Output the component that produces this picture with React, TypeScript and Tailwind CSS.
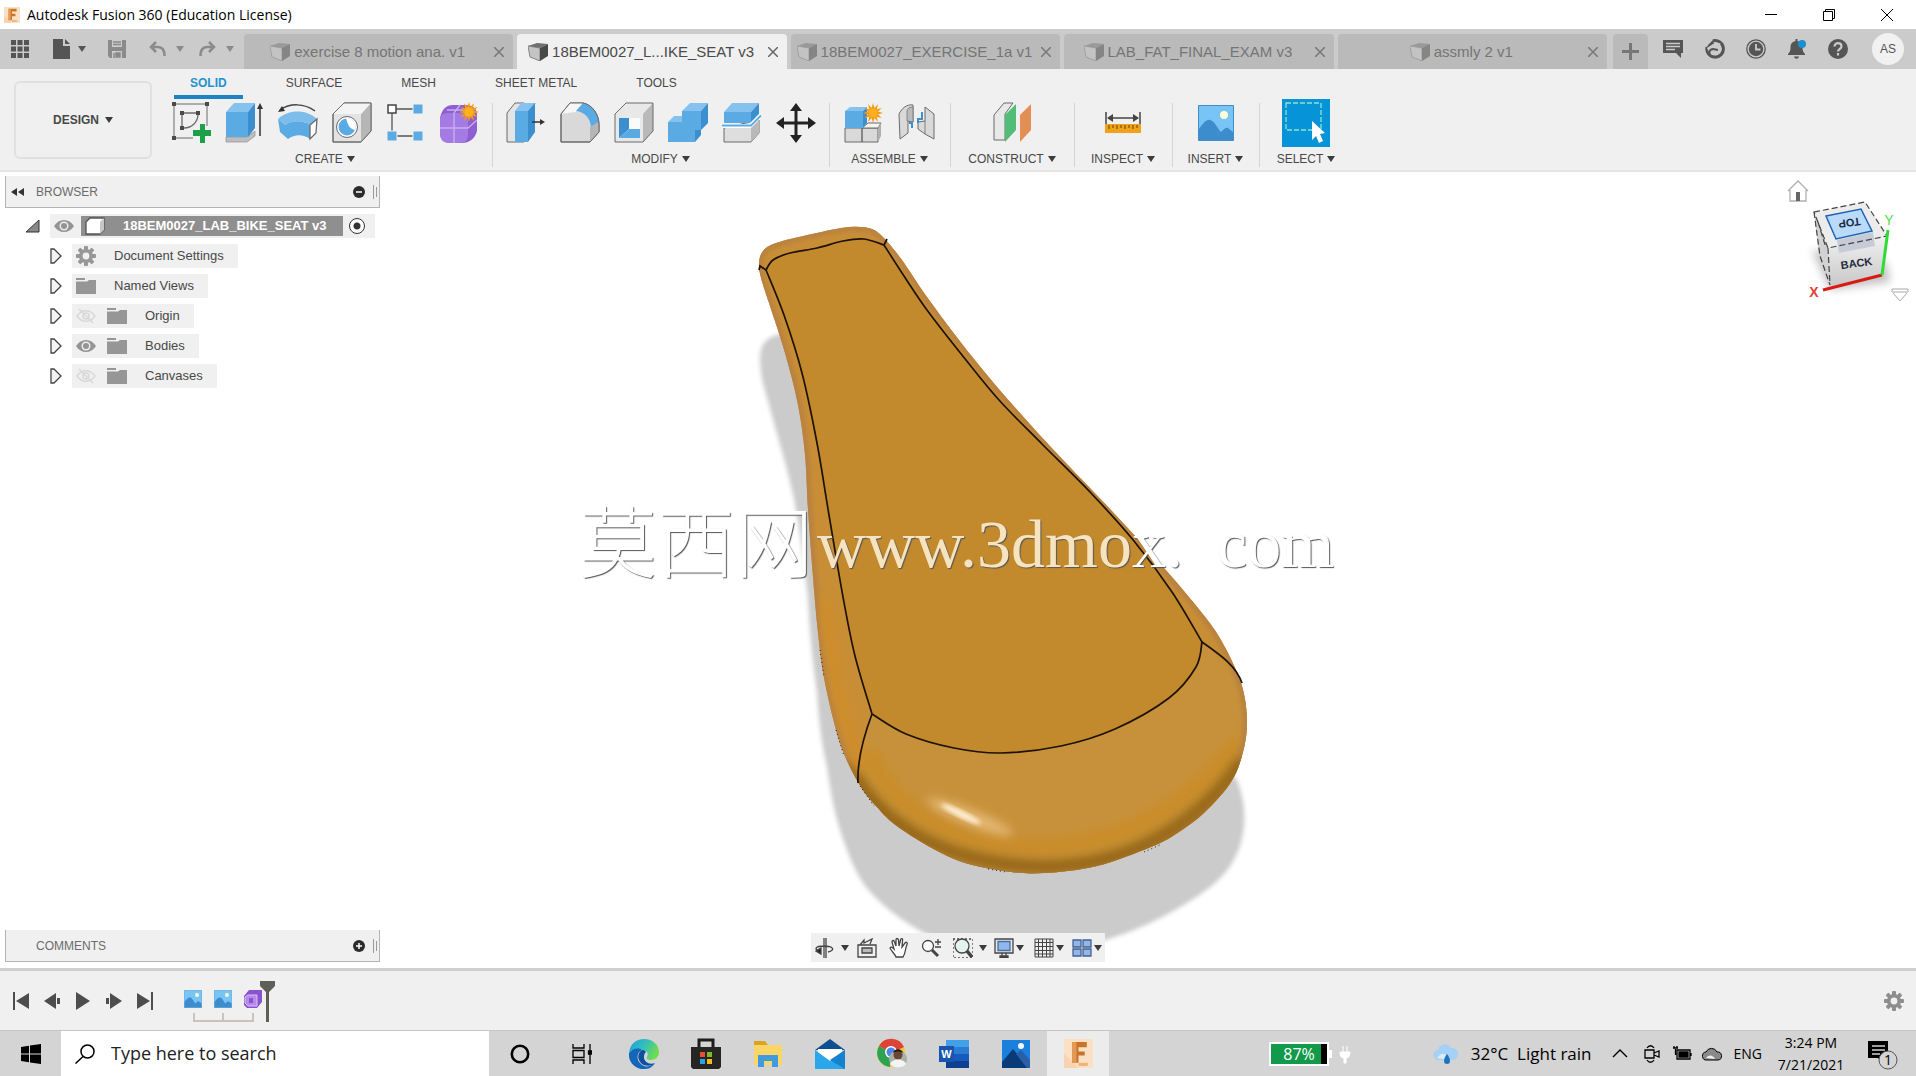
import React from "react";

type Kids = { children: React.ReactNode };

function Caret({ className = "fill-[#3c3c3c]" }: { className?: string }) {
  return (
    <svg width="8" height="6" viewBox="0 0 8 6" className={className} aria-hidden="true">
      <path d="M0 0h8L4 6z" />
    </svg>
  );
}

function Gear({ size, color }: { size: number; color: string }) {
  return (
    <svg width={size} height={size} viewBox="0 0 20 20" aria-hidden="true">
      <g fill={color}>
        {[0, 45, 90, 135].map((a) => (
          <rect key={a} x="8" y="0" width="4" height="20" rx="1" transform={`rotate(${a} 10 10)`} />
        ))}
        <circle cx="10" cy="10" r="7" />
      </g>
      <circle cx="10" cy="10" r="3.4" fill="#f0f0f0" />
    </svg>
  );
}

/* ---------- title bar ---------- */

function FusionLogo({ size }: { size: number }) {
  return (
    <svg width={size} height={size} viewBox="0 0 28 28" aria-hidden="true">
      <rect width="28" height="28" fill="#fbe0c4" />
      <path d="M0 14 14 28H0z" fill="#f8d3ae" />
      <path d="M8 3h14v5h-8v4h6v4h-6v7H8z" fill="#c9742a" />
      <path d="M8 3h4v20H8z" fill="#e39a55" />
      <path d="M14 23h9v3h-9z" fill="#efb277" />
    </svg>
  );
}

function TitleBar() {
  return (
    <header className="flex h-[29px] shrink-0 items-center bg-white pl-1 font-['Open_Sans',sans-serif]">
      <FusionLogo size={16} />
      <h1 className="ml-[7px] flex-1 text-[14px] leading-5 text-black">Autodesk Fusion 360 (Education License)</h1>
      <button aria-label="Minimize" className="flex h-full w-[58px] items-center justify-center">
        <svg width="12" height="12" stroke="#000" fill="none"><path d="M0 5.5h12" /></svg>
      </button>
      <button aria-label="Restore" className="flex h-full w-[58px] items-center justify-center">
        <svg width="12" height="12" stroke="#000" fill="none"><path d="M.5 2.5h9v9h-9zM2.500 2.500v-2h9v9h-2" /></svg>
      </button>
      <button aria-label="Close" className="flex h-full w-[58px] items-center justify-center">
        <svg width="12" height="12" stroke="#000" fill="none"><path d="M0 0l12 12M12 0 0 12" /></svg>
      </button>
    </header>
  );
}

/* ---------- document tabs ---------- */

function DocCube({ active }: { active: boolean }) {
  const c = active ? ["#6f6f6f", "#c4c4c4", "#484848"] : ["#999", "#c3c3c3", "#858585"];
  return (
    <svg width="20" height="18" viewBox="0 0 20 18" aria-hidden="true" className="shrink-0">
      <path d="M0 3 9 0l11 1-8 4z" fill={c[0]} />
      <path d="M0 3l12 2v13L2 14z" fill={c[1]} stroke={c[0]} strokeWidth=".8" />
      <path d="M12 5l8-4v12l-8 5z" fill={c[2]} />
    </svg>
  );
}

const docs = [
  { name: "exercise 8 motion ana. v1" },
  { name: "18BEM0027_L...IKE_SEAT v3", active: true },
  { name: "18BEM0027_EXERCISE_1a v1" },
  { name: "LAB_FAT_FINAL_EXAM v3" },
  { name: "assmly 2 v1" },
];

function DocumentBar() {
  return (
    <div className="flex h-10 shrink-0 items-end bg-[#cbcbcb]">
      <div className="flex h-10 w-[244px] shrink-0 items-center">
        <button aria-label="Data panel" className="flex w-10 justify-center">
          <svg width="18" height="18" fill="#555">
            {[0, 6.5, 13].map((y) => [0, 6.5, 13].map((x) => <rect key={`${x}-${y}`} x={x} y={y} width="5" height="5" />))}
          </svg>
        </button>
        <button aria-label="File" className="flex w-[54px] items-center justify-center gap-2 pl-1">
          <svg width="17" height="20" fill="#555"><path d="M0 0h10v7h7v13H0z" /><path d="M12 0l5 5h-5z" /></svg>
          <Caret className="fill-[#555]" />
        </button>
        <button aria-label="Save" className="ml-1.5 flex w-[34px] justify-center">
          <svg width="18" height="18" viewBox="0 0 18 18">
            <path d="M0 0h18v18H2l-2-2z" fill="#8b8b8b" />
            <path d="M4 0h10v7H4zM4 11h10v7H4z" fill="#cbcbcb" />
            <path d="M5 2h8M5 4.500h8M6 13v5M8 13h4v4H8z" stroke="#8b8b8b" strokeWidth="1.500" fill="#8b8b8b" />
          </svg>
        </button>
        <button aria-label="Undo" className="flex w-16 items-center justify-center gap-2.5">
          <svg width="17" height="16" viewBox="0 0 17 16" fill="none" stroke="#8b8b8b" strokeWidth="2.500"><path d="M7 1 2 6l5 5M2 6h7c4 0 6.500 3 6.500 9" /></svg>
          <Caret className="fill-[#8b8b8b]" />
        </button>
        <button aria-label="Redo" className="flex w-9 items-center justify-center gap-2.5">
          <svg width="17" height="16" viewBox="0 0 17 16" className="shrink-0" fill="none" stroke="#8b8b8b" strokeWidth="2.500"><path d="M10 1l5 5-5 5M15 6H8c-4 0-6.500 3-6.500 9" /></svg>
          <Caret className="shrink-0 fill-[#8b8b8b]" />
        </button>
      </div>
      <nav aria-label="Documents" className="flex h-[35px] min-w-0 flex-1 gap-1">
        {docs.map((d) => (
          <div
            key={d.name}
            className={
              d.active
                ? "flex min-w-0 flex-1 items-center rounded-t bg-[#f0f0f0] text-[#4a4a4a]"
                : "flex min-w-0 flex-1 items-center rounded-t bg-[#bababa] text-[#757575]"
            }
          >
            <button className="flex min-w-0 flex-1 items-center justify-center gap-1 text-[15px] leading-5 whitespace-nowrap">
              <DocCube active={!!d.active} />
              <span>{d.name}</span>
            </button>
            <button aria-label={`Close ${d.name}`} className="mr-1.5 flex w-4 shrink-0 justify-center">
              <svg width="10" height="10" stroke={d.active ? "#666" : "#777"} strokeWidth="1.500"><path d="M0 0l10 10M10 0 0 10" /></svg>
            </button>
          </div>
        ))}
      </nav>
      <div className="flex h-10 shrink-0 items-center pl-1.5">
        <button aria-label="New design" className="flex h-[35px] w-[35px] items-center justify-center self-end rounded-t bg-[#bababa]">
          <svg width="17" height="17" stroke="#777" strokeWidth="3"><path d="M8.500 0v17M0 8.500h17" /></svg>
        </button>
        <button aria-label="Comments" className="ml-1 flex w-[42px] justify-center">
          <svg width="20" height="18" viewBox="0 0 20 18"><path d="M0 0h20v13h-2v5l-5-5H0z" fill="#555" /><path d="M3 3.500h14M3 6.500h14M3 9.500h9" stroke="#cbcbcb" strokeWidth="1.300" /></svg>
        </button>
        <button aria-label="Extensions" className="flex w-[41px] justify-center">
          <svg width="20" height="20" viewBox="0 0 20 20">
            <path d="M8 1.800A8.300 8.300 0 1 1 2 8" fill="none" stroke="#555" strokeWidth="3" />
            <path d="M5 16 1.500 8.500l2-3L8 1l1 4" fill="#555" />
            <path d="M8 5 16 4l-4 3 4 1-3 3-5-1-3 5-3-6z" fill="#cbcbcb" />
            <path d="M4 16c0-4 2-6 4-6l5 1" fill="none" stroke="#555" strokeWidth="2" />
          </svg>
        </button>
        <button aria-label="Job status" className="flex w-[41px] justify-center">
          <svg width="20" height="20" viewBox="0 0 20 20"><circle cx="10" cy="10" r="9.200" fill="none" stroke="#555" strokeWidth="1.300" /><circle cx="10" cy="10" r="7.200" fill="#555" /><path d="M10 5v5.500h4.500" stroke="#cbcbcb" strokeWidth="1.800" fill="none" /></svg>
        </button>
        <button aria-label="Notifications" className="flex w-[41px] justify-center">
          <svg width="20" height="20" viewBox="0 0 20 20"><path d="M8.500 0h2v2c4 1 5 3.500 5 7 0 3 1 4 2.500 6v1H1v-1c1.500-2 2.500-3 2.500-6 0-3.500 1-6 5-7z" fill="#555" /><path d="M7 17.500h5c-.5 3-4.500 3-5 0z" fill="#555" /><circle cx="15" cy="5" r="4" fill="#1a8fd1" /></svg>
        </button>
        <button aria-label="Help" className="flex w-[41px] justify-center">
          <svg width="20" height="20" viewBox="0 0 20 20"><circle cx="10" cy="10" r="10" fill="#555" /><path d="M6.500 7.500c0-4.500 7-4.500 7 0 0 2.500-3.500 2.500-3.500 5M10 14v2.500" stroke="#cbcbcb" strokeWidth="2.200" fill="none" /></svg>
        </button>
        <button className="mr-3 ml-3.5 flex size-8 items-center justify-center rounded-full bg-[#f1f1f1] text-[12px] text-[#555]">AS</button>
      </div>
    </div>
  );
}

/* ---------- ribbon icons (40x42) ---------- */

function I({ children }: Kids) {
  return <svg width="40" height="42" viewBox="0 0 40 42" aria-hidden="true">{children}</svg>;
}
const B = "#5aabe4";
const BD = "#3c8fcf";
const G = "#d9d9d9";
const S = "#6a6a6a";

const Sketch = () => (
  <I>
    <path d="M5 2h29M36 4v20M3 4v30M5 36h17" fill="none" stroke={S} />
    <path d="M11 24V11h14M27 12c0 8-6 14-14 14" fill="none" stroke={S} strokeWidth="1.300" />
    <g fill="#4a4a4a"><path d="M1 0h4v4H1zM34 0h4v4h-4zM1 34h4v4H1zM9 9h4v4H9zM25 9h4v4h-4zM9 24h4v4H9z" /></g>
    <path d="M29 22h5v6h6v6h-6v7h-5v-7h-7v-6h7z" fill="#1ca04a" />
  </I>
);
const Extrude = () => (
  <I>
    <path d="M2 35v5h21l8-6v-5l-8 6z" fill="#bdbdbd" stroke="#999" strokeWidth=".8" />
    <path d="M2 10 10 1h21l-7 9z" fill="#85c2ee" /><path d="M2 10h22v25H2z" fill={B} /><path d="M24 10l7-9v25l-7 9z" fill={BD} />
    <path d="M36 34V5" stroke="#333" strokeWidth="1.500" /><path d="M36 1l3 6h-6z" fill="#333" />
  </I>
);
const Revolve = () => (
  <I>
    <path d="M2 8C12 1 26 1 37 9" fill="none" stroke="#444" strokeWidth="1.500" /><path d="M0 10l4-6 3 5z" fill="#333" />
    <path d="M0 17C10 7 29 7 39 17l-7 6c-7-5-18-5-25 0z" fill="#7dbdec" /><path d="M0 17l7 6c7-5 18-5 25 0v14c-7-5-15-5-22 0L2 30z" fill={B} />
    <path d="M32 23l7-6-1 14-6 6z" fill="#fff" stroke={S} strokeWidth="1.300" />
  </I>
);
const Hole = () => (
  <I>
    <path d="M1 12 12 1h27v28L29 40H1z" fill="#e3e3e3" stroke={S} /><path d="M29 12 39 1v28L29 40z" fill="#b6b6b6" /><path d="M1 12 12 1h27L29 12z" fill="#f4f4f4" />
    <path d="M1 12 12 1h27v28L29 40H1z" fill="none" stroke={S} />
    <circle cx="15" cy="25" r="10.500" fill="#fff" stroke={S} /><circle cx="15" cy="25" r="8.500" fill={B} /><path d="M14 16c2 8 4 11 9 12 2-7-3-12-9-12z" fill="#fff" />
  </I>
);
const Pattern = () => (
  <I>
    <path d="M6 7h26M6 8v26h26" fill="none" stroke="#555" strokeWidth="1.300" />
    <path d="M2 3h8v8H2z" fill="#fff" stroke="#444" strokeWidth="1.500" />
    <path d="M27 2h10v10H27zM1 29h10v10H1zM27 29h10v10H27z" fill={B} stroke="#f0f0f0" />
  </I>
);
const Star = ({ x, y }: { x: number; y: number }) => (
  <g transform={`translate(${x} ${y})`}>
    {[0, 30, 60].map((a) => (
      <path key={a} d="M0-10 2.200-2.200 10 0 2.200 2.200 0 10-2.200 2.200-10 0-2.200-2.200z" fill="#f39c12" transform={`rotate(${a})`} />
    ))}
    <circle r="4.500" fill="#ffb020" />
  </g>
);
const Form = () => (
  <I>
    <path d="M1 16C3 7 7 3 14 3h12c8 0 12 4 12 10v16c-2 8-8 12-15 12H11C4 41 1 37 1 31z" fill="#8e5fd0" />
    <path d="M1 16c1-4 5-5 9-5h11c5 0 8 3 8 7v14c0 6-3 9-8 9H11C4 41 1 37 1 31z" fill="#a47be2" />
    <path d="M15 11v30M1 26h28l9-8M15 11l6-8M8 8h20" fill="none" stroke="#c9aef2" strokeWidth="1.300" />
    <Star x={30} y={10} />
  </I>
);
const PressPull = () => (
  <I>
    <path d="M1 11 9 1h9v39H1z" fill="#e4e4e4" stroke={S} /><path d="M9 9h13v31H9z" fill={B} /><path d="M9 9l6-8h15l-6 8z" fill="#85c2ee" /><path d="M22 9l7-8v29l-7 10z" fill={BD} />
    <path d="M26 20h9" stroke="#333" strokeWidth="1.500" /><path d="M34 17l5 3-5 3z" fill="#333" />
  </I>
);
const Fillet = () => (
  <I>
    <path d="M1 12 10 1h13c10 2 16 12 16 22v7L30 40H1z" fill={G} stroke={S} /><path d="M1 12 10 1h13l-7 9z" fill="#f6f6f6" />
    <path d="M16 9l7-8c10 2 15 11 16 19l-8 5C30 16 25 10 16 9z" fill={B} /><path d="M30 40V25l9-5v10z" fill="#b6b6b6" />
    <path d="M1 12 10 1h13c10 2 16 12 16 22v7L30 40H1z" fill="none" stroke={S} />
  </I>
);
const Shell = () => (
  <I>
    <path d="M1 12 12 1h27v28L29 40H1z" fill="#e8e8e8" /><path d="M29 12 39 1v28L29 40z" fill="#b9b9b9" /><path d="M1 12 12 1h27v28L29 40H1z" fill="none" stroke={S} />
    <path d="M5 16h21v20H5z" fill="#fff" /><path d="M5 16h10v11L5 36z" fill={BD} /><path d="M5 36l10-9h11v9z" fill={B} /><path d="M15 16h11v11H15z" fill="#fafafa" />
  </I>
);
const Combine = () => (
  <I>
    <path d="M14 9l8-8h18l-7 8zM0 20l6-6h8v6z" fill="#85c2ee" />
    <path d="M14 9h19v19h-6v12H0V20h14z" fill={B} /><path d="M33 9l7-8v20l-7 7v0h-6v12l6-7v-5z" fill={BD} />
  </I>
);
const Split = () => (
  <I>
    <path d="M2 26v14h27l8-9V18z" fill="#dedede" stroke={S} /><path d="M29 26v14l8-9V18z" fill="#b9b9b9" />
    <path d="M2 10 10 1h27l-8 9z" fill="#85c2ee" /><path d="M2 10h27v11H2z" fill={B} /><path d="M29 10l8-9v11l-8 9z" fill={BD} />
    <path d="M0 24h28L39 13" fill="none" stroke="#fff" strokeWidth="4" /><path d="M0 23.500h29l10-10" fill="none" stroke={B} strokeWidth="1.800" />
  </I>
);
const Move = () => (
  <I>
    <path d="M20 6v30M5 21h30" stroke="#222" strokeWidth="3" /><path d="M20 1l6 8H14zM20 41l6-8H14zM0 21l8-6v12zM40 21l-8-6v12z" fill="#222" />
  </I>
);
const NewComponent = () => (
  <I>
    <path d="M2 26h17v14H2zM19 26h16v14H19z" fill={G} stroke={S} /><path d="M19 26l6-5h13l-3 5z" fill="#f5f5f5" stroke={S} /><path d="M35 26l3-5v13l-3 6z" fill="#b0b0b0" />
    <path d="M2 9l5-4h17l-4 4z" fill="#85c2ee" /><path d="M2 9h18v17H2z" fill={B} /><path d="M20 9l4-4v16l-4 5z" fill={BD} />
    <Star x={30} y={11} />
  </I>
);
const Joint = () => (
  <I>
    <path d="M2 12C5 6 10 2 16 3v17l-5-1v12l-8 6z" fill={G} stroke={S} /><path d="M10 19V9c0-4 6-4 6-4v15z" fill="#bbb" stroke={S} strokeWidth=".7" />
    <path d="M37 37l-9-5-7-5v-7l7-1V5l9 7z" fill={G} stroke={S} /><path d="M28 19v13" stroke={S} strokeWidth=".8" />
    <path d="M12 21h3v5M25 10v7h-4v4" fill="none" stroke={BD} strokeWidth="2" />
  </I>
);
const Construct = () => (
  <I>
    <path d="M2 13 12 1h9L13 12v26H2z" fill="#e8e8e8" stroke={S} /><path d="M13 13 24 2v26L13 40z" fill="#52bd78" /><path d="M28 13 39 2v26L28 40z" fill="#e38e55" />
  </I>
);
const Inspect = () => (
  <I>
    <path d="M3 10v12M37 10v12M5 16h30" stroke="#444" strokeWidth="1.500" /><path d="M4 16l6-4v8zM36 16l-6-4v8z" fill="#444" />
    <path d="M2 22h36v9H2z" fill="#f0a31a" /><path d="M6 23v4M10 23v3M14 23v4M18 23v3M22 23v4M26 23v3M30 23v4M34 23v3" stroke="#5c4210" />
  </I>
);
const Picture = ({ size }: { size: number }) => (
  <svg width={size} height={size} viewBox="0 0 36 36" aria-hidden="true">
    <path d="M.5.5h35v35H.5z" fill="#79c4f7" stroke="#3d8ec9" /><circle cx="26" cy="10" r="4" fill="#fffbd8" />
    <path d="M1 24C5 18 9 14 12 15c5 1 7 8 11 12 3-3 5-5 7-4l5 4v8H1z" fill="#3d8dcc" />
  </svg>
);
const Select = () => (
  <svg width="48" height="48" viewBox="0 0 48 48" aria-hidden="true">
    <path d="M0 0h48v48H0z" fill="#0693d8" /><path d="M4 4h35v27H4z" fill="none" stroke="#8fe3c8" strokeWidth="1.300" strokeDasharray="5 2" />
    <path d="M30 22l13 12-5 1 3 7-4 2-3-7-4 4z" fill="#fff" />
  </svg>
);

type Group = { label: string; box: string; cell: string; icons: [string, React.ReactNode][] };
const groups: Group[] = [
  { label: "CREATE", box: "w-[328px] pr-1.5", cell: "w-[54px]", icons: [["Create sketch", <Sketch />], ["Extrude", <Extrude />], ["Revolve", <Revolve />], ["Hole", <Hole />], ["Pattern", <Pattern />], ["Create form", <Form />]] },
  { label: "MODIFY", box: "w-[337px]", cell: "w-[54px]", icons: [["Press pull", <PressPull />], ["Fillet", <Fillet />], ["Shell", <Shell />], ["Combine", <Combine />], ["Split body", <Split />], ["Move", <Move />]] },
  { label: "ASSEMBLE", box: "w-[121px]", cell: "w-[54px]", icons: [["New component", <NewComponent />], ["Joint", <Joint />]] },
  { label: "CONSTRUCT", box: "w-[124px]", cell: "w-[54px]", icons: [["Offset plane", <Construct />]] },
  { label: "INSPECT", box: "w-[98px]", cell: "w-[54px]", icons: [["Measure", <Inspect />]] },
  { label: "INSERT", box: "w-[87px]", cell: "w-[54px]", icons: [["Insert image", <Picture size={36} />]] },
  { label: "SELECT", box: "w-[94px]", cell: "w-[54px]", icons: [["Select", <Select />]] },
];

function Ribbon() {
  return (
    <div className="flex h-[103px] shrink-0 border-b-2 border-[#e4e4e4] bg-[#f0f0f0] text-[12px] leading-4 text-[#484848]">
      <button className="mt-3 ml-[14px] flex h-[78px] w-[138px] shrink-0 items-center justify-center gap-1.5 rounded-md border-2 border-[#e0e0e0] text-[12px] font-bold">
        DESIGN <Caret />
      </button>
      <div className="ml-3 flex min-w-0 flex-col">
        <nav aria-label="Workspace tabs" className="ml-2.5 flex gap-[27px]">
          <button className="border-b-4 border-[#1f82c2] px-4 pt-1.5 pb-1 font-bold text-[#2492cf]">SOLID</button>
          {["SURFACE", "MESH", "SHEET METAL", "TOOLS"].map((t) => (
            <button key={t} className="border-b-4 border-transparent px-4 pt-1.5 pb-1">{t}</button>
          ))}
        </nav>
        <div className="flex">
          {groups.map((g) => (
            <section key={g.label} aria-label={g.label} className={`${g.box} flex shrink-0 flex-col items-center`}>
              <div className="flex h-12 w-full justify-center">
                {g.icons.map(([name, icon]) => (
                  <button key={name} aria-label={name} className={`${g.cell} flex items-center justify-center`}>{icon}</button>
                ))}
              </div>
              <button className="mt-1 flex items-center gap-1">{g.label} <Caret /></button>
            </section>
          )).flatMap((el, i) => (i === 0 ? [el] : [<div key={`d${i}`} className="-mr-px mt-1 h-16 w-px shrink-0 bg-[#d4d4d4]" />, el]))}
        </div>
      </div>
    </div>
  );
}

/* ---------- model drawing ---------- */

type Pt = [number, number];

/* Catmull-Rom spline through the points, as cubic Bezier segments. */
function curve(p: Pt[]): string {
  let d = "";
  for (let i = 0; i < p.length - 1; i++) {
    const a = p[i - 1] ?? p[i];
    const b = p[i];
    const c = p[i + 1];
    const e = p[i + 2] ?? c;
    d += `C${b[0] + (c[0] - a[0]) / 6} ${b[1] + (c[1] - a[1]) / 6} ${c[0] - (e[0] - b[0]) / 6} ${c[1] - (e[1] - b[1]) / 6} ${c[0]} ${c[1]}`;
  }
  return d;
}

const OUTLINE =
  "M886 240" +
  curve([
    [886, 240], [902, 260], [927, 297], [959, 340], [992, 381], [1028, 422], [1065, 462], [1111, 510], [1157, 560], [1198, 608],
    [1221, 640], [1241, 683], [1247, 720], [1243, 752], [1231, 782], [1204, 813], [1176, 834], [1151, 847], [1097, 866], [1044, 873],
    [1004, 871], [954, 859], [901, 829], [876, 806], [858, 782], [840, 743], [825, 683], [818, 633], [813, 577], [808, 510],
    [805, 455], [798, 405], [785, 353], [769, 303], [761, 278], [759, 263], [763, 251], [776, 243], [812, 234], [849, 227], [872, 229], [886, 240],
  ]) + "Z";
const TOP =
  "M766 270" +
  curve([[766, 270], [773, 260], [790, 253], [817, 248], [843, 241], [864, 239], [884, 245]]) +
  curve([[884, 245], [904, 276], [927, 310], [962, 355], [999, 400], [1042, 444], [1090, 492], [1134, 541], [1172, 592], [1202, 642]]) +
  curve([[1202, 642], [1196, 667], [1169, 698], [1115, 729], [1061, 746], [1001, 753], [954, 748], [906, 734], [872, 714]]) +
  curve([[872, 714], [855, 656], [843, 597], [829, 515], [817, 443], [802, 373], [784, 315], [766, 270]]) +
  "Z";

function Model() {
  return (
    <svg className="absolute inset-0 h-full w-full" viewBox="0 172 1916 796" preserveAspectRatio="xMidYMid slice" role="img" aria-label="Bike seat model">
      <defs>
        <clipPath id="seat"><path d={OUTLINE} /></clipPath>
        <filter id="b2" x="-20%" y="-20%" width="140%" height="140%"><feGaussianBlur stdDeviation="2" /></filter>
        <filter id="b5" x="-20%" y="-50%" width="140%" height="200%"><feGaussianBlur stdDeviation="5" /></filter>
      </defs>
      <path filter="url(#b2)" fill="#cbcbcb" d="M790 333C768 334 760 343 760 358C760 375 764 388 768 401C778 440 790 475 796 510C802 540 805 570 808 600C810 640 814 670 817 693C819 725 822 745 827 767C831 795 835 815 841 833C850 860 856 873 866 887C880 904 900 920 926 934C975 955 1060 955 1108 939C1140 930 1185 908 1215 883C1245 858 1252 815 1236 778L1000 700Z" />
      <path d={OUTLINE} fill="#c88e36" />
      <g clipPath="url(#seat)">
        <path d="M872 714C901 740 960 753 1001 753C1080 753 1200 705 1202 642L1250 690V780L1100 880H900L855 780Z" fill="#c7913b" />
        <path d="M868 750C885 795 930 833 1000 845C1090 853 1170 830 1240 740" fill="none" stroke="#c98d29" strokeWidth="18" filter="url(#b5)" />
        <path d={OUTLINE} fill="none" stroke="#b9823f" strokeWidth="9" filter="url(#b2)" />
        <path d="M848 765C880 828 950 865 1044 867C1120 866 1190 835 1243 760" fill="none" stroke="#966812" strokeWidth="14" filter="url(#b5)" />
        <path d="M855 790C890 842 960 873 1044 875C1120 873 1180 845 1215 812" fill="none" stroke="#ab7e36" strokeWidth="4" filter="url(#b2)" />
        <path d="M826 600C833 670 842 710 862 770" fill="none" stroke="#cf8d2c" strokeWidth="12" filter="url(#b5)" />
        <ellipse cx="970" cy="817" rx="46" ry="8" fill="#e3b56f" transform="rotate(22 970 817)" filter="url(#b5)" />
        <ellipse cx="961" cy="814" rx="22" ry="3.500" fill="#fff0d6" transform="rotate(26 961 814)" filter="url(#b2)" />
      </g>
      <path d={TOP} fill="#c28a2d" stroke="#1c1206" strokeWidth="1.700" />
      <path d="M759 270L760 266L766 270M884 245L887 239M872 714C863 738 857 760 858 783M1202 642C1222 656 1236 666 1242 683" fill="none" stroke="#1c1206" strokeWidth="1.700" />
      <path d="M820 650l4 26M836 730l8 26M860 786l14 20M988 869l18 3M1144 852l18-8" fill="none" stroke="#222" strokeWidth="1" strokeDasharray="1 3" />
    </svg>
  );
}

function Watermark() {
  return (
    <p className="pointer-events-none absolute top-[46%] left-1/2 -mt-[54px] flex w-[758px] -translate-x-1/2 items-center leading-[108px] whitespace-nowrap text-white [text-shadow:1px_1px_1px_#555]">
      <span className="w-[238px] pb-3 font-['Noto_Sans_CJK_SC',sans-serif] text-[78px] font-light">莫西网</span>
      <span className="w-40 font-['Liberation_Serif',serif] text-[68px] text-[#f6e3bf]">www.</span>
      <span className="w-60 font-['Liberation_Serif',serif] text-[68px]"><span className="text-[#f6e3bf]">3dmo</span>x.</span>
      <span className="w-[120px] font-['Liberation_Serif',serif] text-[68px]">com</span>
    </p>
  );
}

function ViewCube() {
  return (
    <svg className="absolute top-1.5 right-1 h-[130px] w-[132px]" viewBox="1780 178 132 130" role="img" aria-label="View cube">
      <defs>
        <filter id="cs" x="-30%" y="-30%" width="160%" height="160%"><feGaussianBlur stdDeviation="4" /></filter>
        <linearGradient id="cf" x1="0" y1="0" x2="0" y2="1"><stop offset="0" stopColor="#f1f1f1" /><stop offset="1" stopColor="#c9c9c9" /></linearGradient>
      </defs>
      <path d="M1788 191l10-10 10 10M1790 190v11h16v-11" fill="#fff" stroke="#b0b0b0" strokeWidth="1.300" /><path d="M1796 192h4v9h-4z" fill="#666" />
      <path d="M1812 250l18 40 60-8-4-20z" fill="#8f8f8f" opacity=".55" filter="url(#cs)" />
      <path d="M1814 212l14 36 2 37-11-29z" fill="#d2d2d2" />
      <path d="M1828 248l59-12-5 39-52 10z" fill="url(#cf)" />
      <path d="M1814 212l51-10 22 34-59 12z" fill="#ececec" />
      <path d="M1837 240l36-8 2 14-36 7z" fill="#c5ccd8" />
      <path d="M1826 216l35-7 11 22-36 8z" fill="#b9dbf9" stroke="#1f62b5" strokeWidth="1.500" />
      <path d="M1814 212l51-10 22 34-59 12zM1828 248l2 37M1814 212l6 44 10 29M1818 222l8 26" fill="none" stroke="#444" strokeWidth="1.200" strokeDasharray="6 3" />
      <path d="M1823 290l59-15" stroke="#d81a14" strokeWidth="3" /><path d="M1882 275l6-45" stroke="#2fdc34" strokeWidth="3" />
      <g fontFamily="Liberation Sans, sans-serif" fontWeight="bold" textAnchor="middle">
        <text x="1849" y="219" fontSize="11" fill="#1d2c45" transform="rotate(172 1849 219)">TOP</text>
        <text x="1857" y="267" fontSize="11" fill="#252b3d" transform="rotate(-8 1857 267)">BACK</text>
        <text x="1814" y="297" fontSize="14" fill="#e04038">X</text>
        <text x="1889" y="225" fontSize="14" fontWeight="normal" fill="#4be04b">Y</text>
      </g>
      <path d="M1892 289h16v3h-16zM1893 293l7 8 7-8" fill="#fff" stroke="#aaa" />
    </svg>
  );
}

/* ---------- browser tree ---------- */

function Eye({ off }: { off?: boolean }) {
  return off ? (
    <svg width="20" height="16" viewBox="0 0 20 16" fill="none" stroke="#d8d8d8" strokeWidth="1.500" aria-hidden="true"><path d="M1 8c5-7 13-7 18 0-5 7-13 7-18 0zM3 1l14 14" /><circle cx="10" cy="8" r="3" /></svg>
  ) : (
    <svg width="20" height="16" viewBox="0 0 20 16" aria-hidden="true"><path d="M0 8c5-8 15-8 20 0-5 8-15 8-20 0z" fill="#949494" /><circle cx="10" cy="8" r="4.500" fill="#eee" /><circle cx="10" cy="8" r="3" fill="#949494" /></svg>
  );
}
const Folder = () => (
  <svg width="20" height="16" viewBox="0 0 20 16" fill="#969696" aria-hidden="true"><path d="M0 0h9v2H0zM0 3.500h11L13 2h7v14H0z" /></svg>
);

const rows: { name: string; eye?: "on" | "off"; gear?: boolean }[] = [
  { name: "Document Settings", gear: true },
  { name: "Named Views" },
  { name: "Origin", eye: "off" },
  { name: "Bodies", eye: "on" },
  { name: "Canvases", eye: "off" },
];

function PanelHead({ title, arrow, plus }: { title: string; arrow?: boolean; plus?: boolean }) {
  return (
    <div className="ml-[5px] flex h-8 w-[375px] items-center border-x border-b border-[#b4b4b4] bg-[#f0f0f0] pr-0.5 text-[12px] text-[#6b6b6b]">
      <button aria-label={`Collapse ${title}`} className="flex w-[30px] pl-[5px]">
        {arrow && <svg width="13" height="8" fill="#333"><path d="M6 0v8L0 4zM13 0v8L7 4z" /></svg>}
      </button>
      <h2 className="flex-1">{title}</h2>
      <button aria-label={`${title} options`} className="mr-2">
        <svg width="12" height="12" viewBox="0 0 12 12"><circle cx="6" cy="6" r="6" fill="#2c2c2c" /><path d={plus ? "M3 6h6M6 3v6" : "M3 6h6"} stroke="#fff" strokeWidth="1.500" /></svg>
      </button>
      <svg width="4" height="14" stroke="#999" aria-hidden="true"><path d="M.5 0v14M3.500 2v10" /></svg>
    </div>
  );
}

function Browser() {
  return (
    <aside className="relative w-[380px] pt-1">
      <PanelHead title="BROWSER" arrow />
      <ul className="mt-1.5 flex flex-col gap-1.5 text-[13px] leading-6 text-[#484848]">
        <li className="flex h-6 items-center">
          <button aria-label="Collapse root" className="ml-[25px] w-[25px]">
            <svg width="15" height="14"><path d="M14 1v12H1z" fill="#888" stroke="#333" /></svg>
          </button>
          <div className="flex h-6 flex-1 items-center bg-[#f0f0f0] pl-1">
            <button aria-label="Visibility"><Eye /></button>
            <div className="ml-[7px] flex h-5 w-[262px] items-center bg-[#8f8f8f]">
              <svg width="20" height="18" viewBox="0 0 20 18" className="ml-1"><path d="M1 5l4-4h14v12l-4 4H1z" fill="#fff" stroke="#555" strokeWidth="1.300" /><path d="M15 5l4-4v12l-4 4z" fill="#c5c5c5" /></svg>
              <span className="ml-[18px] font-bold text-white">18BEM0027_LAB_BIKE_SEAT v3</span>
            </div>
            <label className="ml-1.5 flex">
              <input type="radio" name="activate" defaultChecked aria-label="Activate component" className="size-4 appearance-none rounded-full border border-[#333] bg-[radial-gradient(circle,#333_3px,#fff_4px)]" />
            </label>
          </div>
          <span className="w-[5px]" />
        </li>
        {rows.map((r) => (
          <li key={r.name} className="flex h-6 items-center">
            <button aria-label={`Expand ${r.name}`} className="ml-[50px] w-[22px]">
              <svg width="12" height="16"><path d="M1 1h3l7 7-7 7H1z" fill="#f4f4f4" stroke="#444" strokeWidth="1.300" /></svg>
            </button>
            <div className="flex h-6 items-center bg-[#f0f0f0] pr-3.5 pl-1">
              {r.eye && <button aria-label={`Visibility ${r.name}`} className="mr-[11px]"><Eye off={r.eye === "off"} /></button>}
              {r.gear ? <Gear size={20} color="#979797" /> : <Folder />}
              <span className="ml-[18px]">{r.name}</span>
            </div>
          </li>
        ))}
      </ul>
    </aside>
  );
}

/* ---------- navigation bar ---------- */

function NavBar() {
  const k = { width: 20, height: 20, viewBox: "0 0 20 20", fill: "none", stroke: "#444", strokeWidth: 1.3 };
  return (
    <div className="flex h-[29px] items-center bg-[#f0f0f0] pl-1">
      <button aria-label="Orbit" className="flex w-9 items-center gap-1.5">
        <svg {...k}><path d="M9 0v20M11 0v20M6 13C-2 12 0 8 9 8c9 0 12 4 4 6" /><path d="M1 13l5-3v6z" fill="#222" /></svg><Caret />
      </button>
      <button aria-label="Look at" className="flex w-8 justify-center">
        <svg {...k}><path d="M1 7h18v12H1zM3 7l4-5v3l8-4-2 5" /><path d="M5 10h10v5H5z" fill="#bbb" /></svg>
      </button>
      <button aria-label="Pan" className="flex w-8 justify-center">
        <svg {...k}><path d="M7 19c-1-3-4-5-6-9 1-1.500 2-1 4 1L3 4c0-2 2-2 2.500 0L7 8 7 2c0-2 2-2 2.500 0L10 8l1.500-6c.5-2 2.500-1.500 2 .5L13 9l3-4c1-1.500 3-.5 2 1.500-2 4-1 8-4 12.500z" fill="#fff" /></svg>
      </button>
      <button aria-label="Zoom" className="flex w-8 justify-center">
        <svg {...k}><circle cx="7" cy="8" r="5.500" fill="#fafafa" /><path d="M11 12l6 6" strokeWidth="3" /><path d="M14 4h6M17 1v6M14 9h6" /></svg>
      </button>
      <button aria-label="Fit" className="flex w-10 items-center gap-1.5 pl-1.5">
        <svg {...k} className="shrink-0"><path d="M0 1h20v19H0z" strokeDasharray="2 2" /><circle cx="9" cy="8" r="7" fill="#e4f3ee" /><path d="M14 13l5 6" strokeWidth="3.500" /></svg><Caret className="shrink-0 fill-[#3c3c3c]" />
      </button>
      <button aria-label="Display settings" className="ml-0.5 flex w-10 items-center justify-center gap-0.5">
        <svg {...k}><path d="M1 1h18v14H1z" fill="#e8e8e8" /><path d="M4 3.500h12v9H4z" fill="#8fb7ec" stroke="#4a6fa5" /><path d="M6 18h8v1.500H6zM8 15v3h4v-3" /></svg><Caret />
      </button>
      <button aria-label="Grid" className="flex w-10 items-center justify-center gap-0.5">
        <svg {...k} strokeWidth={1}><path d="M1 1h18v18H1zM4.500 1v18M8.500 1v18M12.500 1v18M16 1v18M1 4.500h18M1 8.500h18M1 12.500h18M1 16h18" /></svg><Caret />
      </button>
      <button aria-label="Viewports" className="flex w-9 items-center justify-center gap-0.5">
        <svg {...k}><path d="M1 2h8v7H1zM11 2h8v7h-8zM1 11h8v7H1zM11 11h8v7h-8z" fill="#8fb7ec" stroke="#44618f" /></svg><Caret />
      </button>
    </div>
  );
}

/* ---------- timeline ---------- */

function Timeline() {
  const steps: [string, string][] = [
    ["First", "M0 0h2v18H0zM16 1v16L3 9z"],
    ["Previous", "M12 1v16L0 9zM13 6h3v6h-3z"],
    ["Play", "M1 0v18l14-9z"],
    ["Next", "M4 1v16l12-8zM0 6h3v6H0z"],
    ["Last", "M0 1v16l13-8zM14 0h2v18h-2z"],
  ];
  return (
    <footer className="flex h-[62px] shrink-0 items-center border-t-[3px] border-[#cfcfcf] bg-[#f0f0f0] pl-[5px]">
      {steps.map(([n, d]) => (
        <button key={n} aria-label={n} className="flex w-[31px] justify-center"><svg width="16" height="18" fill="#4d4d4d"><path d={d} /></svg></button>
      ))}
      <div className="relative ml-6 flex h-10 items-start gap-3 pt-[9px]">
        <button aria-label="Canvas 1"><Picture size={18} /></button>
        <button aria-label="Canvas 2"><Picture size={18} /></button>
        <button aria-label="Form">
          <svg width="18" height="18" viewBox="0 0 18 18"><path d="M5 0h13v12l-5 6H3l-3-3V6z" fill="#8a52cc" /><path d="M1 7l3-2h9v11H4l-3-3z" fill="#b48bea" stroke="#d8c0f8" /><path d="M5 8h4v5H5z" fill="#8a52cc" /></svg>
        </button>
        <svg width="92" height="42" viewBox="0 0 92 42" fill="none" className="absolute top-0 left-0" aria-hidden="true">
          <path d="M10 32v8h59v-8M39 32v7" stroke="#c9c2bd" strokeWidth="2" />
          <path d="M76 0h15v5l-6 6v30h-3V11l-6-6z" fill="#5f5f5a" />
        </svg>
      </div>
      <button aria-label="Timeline settings" className="mr-3 ml-auto"><Gear size={20} color="#8e8e8e" /></button>
    </footer>
  );
}

/* ---------- taskbar ---------- */

const apps: [string, React.ReactNode][] = [
  ["Cortana", <svg width="20" height="20"><circle cx="10" cy="10" r="8.200" fill="none" stroke="#000" strokeWidth="2.600" /></svg>],
  ["Task view", <svg width="20" height="20" fill="none" stroke="#000" strokeWidth="1.300"><path d="M1 0v4h11V0M1 20v-4h11v4M1 6.500h11v7H1zM18 0v20" /><path d="M16.500 7h3v3h-3z" fill="#000" /></svg>],
  ["Edge", (
    <svg width="30" height="30" viewBox="0 0 30 30">
      <defs><linearGradient id="eg" x1="0" y1="0" x2="1" y2=".4"><stop offset="0" stopColor="#1b9de2" /><stop offset=".6" stopColor="#37c2b5" /><stop offset="1" stopColor="#6fdc4e" /></linearGradient></defs>
      <path d="M0 14C1 5 7 0 15 0c9 0 15 6 15 13 0 5-4 8-8 8-3 0-5-1-4-3 2-3 0-7-4-7C8 9 2 11 0 14z" fill="url(#eg)" />
      <path d="M0 14c3-4 9-6 13-3-5 2-6 9-2 13 4 5 10 4 15 0-3 5-7 6-11 6C6 30-1 23 0 14z" fill="#1466b8" />
      <path d="M13 11c-5 3-5 10 0 14 3 2 9 3 13-1-6 2-11-1-11-6 0-3 1-4 2-5-1-2-3-2-4-2z" fill="#0d4fa0" />
    </svg>
  )],
  ["Store", <svg width="30" height="32" viewBox="0 0 30 32"><path d="M8 9V2h14v7" fill="none" stroke="#1d1d1d" strokeWidth="3" /><path d="M0 9h30v20l-2 2H2l-2-2z" fill="#272524" /><path d="M9 14h5v5H9z" fill="#e8502b" /><path d="M16 14h5v5h-5z" fill="#7fb92a" /><path d="M9 21h5v5H9z" fill="#28a4ec" /><path d="M16 21h5v5h-5z" fill="#f8b914" /></svg>],
  ["File Explorer", <svg width="28" height="26" viewBox="0 0 28 26"><path d="M0 0h11l3 4H0z" fill="#dca521" /><path d="M0 4h28v20H0z" fill="#fbd566" /><path d="M4 26V14h20v12h-6v-6h-8v6z" fill="#3f9bdc" /></svg>],
  ["Mail", <svg width="30" height="30" viewBox="0 0 30 30"><path d="M0 11 15 0l15 11z" fill="#0e4f92" /><path d="M3 10h24v14H3z" fill="#fff" /><path d="M0 11l15 11 15-11v19H0z" fill="#29a7ea" /><path d="M30 11v19L15 21z" fill="#1482cf" /></svg>],
  ["Chrome", (
    <svg width="31" height="31" viewBox="0 0 31 31">
      <circle cx="14" cy="15" r="14" fill="#f7c52e" /><path d="M14 15 2 8a14 14 0 0 1 25 1z" fill="#dc4437" /><path d="M14 15 2 8a14 14 0 0 0 11 21z" fill="#2ea352" />
      <circle cx="14" cy="14" r="6" fill="#fff" /><circle cx="14" cy="14" r="4.500" fill="#4a87ee" />
      <circle cx="21" cy="21" r="9" fill="#a9b0a4" /><circle cx="21" cy="17" r="4.500" fill="#6b4632" /><path d="M16 15c1-5 9-5 10 0-3-2-7-2-10 0z" fill="#1f1814" /><path d="M13 26c2-6 14-6 16 0-4 5-12 5-16 0z" fill="#f4f4f4" />
    </svg>
  )],
  ["Word", (
    <svg width="30" height="28" viewBox="0 0 30 28">
      <path d="M7 0h23v7H7z" fill="#41a0e8" /><path d="M7 7h23v7H7z" fill="#2b7cd3" /><path d="M7 14h23v7H7z" fill="#185abd" /><path d="M7 21h23v7H7z" fill="#103f91" /><path d="M0 6h15v16H0z" fill="#1a54ad" />
      <text x="7.500" y="18" fontSize="11" fontWeight="bold" fontFamily="Liberation Sans, sans-serif" textAnchor="middle" fill="#fff">W</text>
    </svg>
  )],
  ["Photos", <svg width="28" height="28" viewBox="0 0 28 28"><path d="M0 0h28v28H0z" fill="#1b80dc" /><path d="M0 22 11 9l16 19H0z" fill="#0b3a79" /><path d="M14 14l5-4 9 10v8h-3z" fill="#2a5fa8" /><circle cx="19" cy="6" r="3" fill="#f1f6fb" /></svg>],
  ["Fusion 360", <FusionLogo size={29} />],
];

function Taskbar() {
  return (
    <div className="flex h-[46px] shrink-0 items-stretch border-t border-[#c6c6c6] bg-[#d4d4d4] font-['Open_Sans',sans-serif] text-black">
      <button aria-label="Start" className="flex w-[61px] items-center justify-center">
        <svg width="20" height="20" viewBox="0 0 20 20"><path d="M0 3l8-1.200V9.500H0zM9 1.600 20 0v9.500H9zM0 10.500h8v7.700L0 17zM9 10.500h11V20L9 18.400z" /></svg>
      </button>
      <label className="flex w-[428px] items-center bg-white pl-3.5">
        <svg width="20" height="20" className="shrink-0" fill="none" stroke="#000" strokeWidth="1.500"><circle cx="12.500" cy="7.500" r="6.500" /><path d="M8 12.500.5 19.500" /></svg>
        <input type="text" aria-label="Search" placeholder="Type here to search" className="ml-4 w-full min-w-0 bg-transparent text-[18px] outline-none placeholder:text-[#222]" />
      </label>
      {apps.map(([n, icon]) => (
        <button key={n} aria-label={n} className={n === "Fusion 360" ? "flex w-[62px] items-center justify-center bg-[#ececec]" : "flex w-[62px] items-center justify-center"}>{icon}</button>
      ))}
      <div className="ml-auto flex items-center whitespace-nowrap">
        <div className="flex h-6 w-[60px] items-center justify-end border-2 border-white bg-[#12994a] text-[16px] leading-5 text-white">
          87%<span className="ml-1.5 h-full w-1.5 bg-black" />
        </div>
        <svg width="22" height="22" viewBox="0 0 22 22" aria-hidden="true"><path d="M0 7h3v8H0z" fill="#fff" /><path d="M14 3v6M18 3v6M11 9h10c0 5-2 6-4 6v5h-2v-5c-2 0-4-1-4-6z" fill="#fff" stroke="#fff" /></svg>
        <button className="ml-[82px] flex items-center gap-3 text-[17px]">
          <svg width="26" height="22" viewBox="0 0 26 22" aria-hidden="true"><path d="M6 17a5 5 0 0 1-1-10 7 7 0 0 1 13-2 6 6 0 0 1 2 12z" fill="#a4d1f5" /><path d="M4 15c4-6 10-6 12 2z" fill="#d8ecfb" /><path d="M14 11c4 5 4 10 0 10s-4-5 0-10z" fill="#1f74bd" /></svg>
          <span>32°C&nbsp; Light rain</span>
        </button>
        <button aria-label="Show hidden icons" className="ml-5"><svg width="16" height="9" fill="none" stroke="#000" strokeWidth="1.400"><path d="M1 8l7-7 7 7" /></svg></button>
        <button aria-label="Meet now" className="ml-4"><svg width="16" height="18" fill="none" stroke="#000" strokeWidth="1.300"><path d="M1 5h9v8H1zM10 8l5-2v6l-5-2M3 3c2-3 5-3 7 0M3 15c2 3 5 3 7 0" /></svg></button>
        <button aria-label="Battery" className="ml-3"><svg width="20" height="16" fill="none" stroke="#000" strokeWidth="1.300"><path d="M5 4h13v9H5zM19 7v3M1 2h5M2 0v2M5 0v2M3.500 3v6" /><path d="M7 6h9v5H7z" fill="#000" /></svg></button>
        <button aria-label="OneDrive" className="ml-2.5"><svg width="20" height="14" viewBox="0 0 20 14"><path d="M5 13a4 4 0 0 1-1-8 6 6 0 0 1 11 0 4 4 0 0 1 1 8z" fill="#8a8a8a" stroke="#000" /><path d="M4 11c3-4 7-3 9 1z" fill="#eee" /></svg></button>
        <button className="ml-3 text-[14px]">ENG</button>
        <button className="ml-3 flex w-[74px] flex-col items-center text-[14px] leading-[22px]"><span>3:24 PM</span><span>7/21/2021</span></button>
        <button aria-label="Notifications" className="mr-4 ml-5">
          <svg width="32" height="32" viewBox="0 0 32 32"><path d="M0 3h20v17h-5v5l-5-5H0z" /><path d="M4 8h13M4 12h13M4 16h8" stroke="#d4d4d4" strokeWidth="1.500" /><circle cx="20" cy="22" r="9" fill="#d4d4d4" stroke="#555" /><text x="20" y="27" fontSize="14" textAnchor="middle" fontFamily="Open Sans, sans-serif">1</text></svg>
        </button>
      </div>
    </div>
  );
}

export default function App() {
  return (
    <div className="flex h-screen min-h-[600px] flex-col overflow-hidden bg-white font-['Liberation_Sans',Arial,sans-serif]">
      <TitleBar />
      <DocumentBar />
      <Ribbon />
      <main className="relative flex min-h-0 flex-1 flex-col justify-between overflow-hidden bg-white">
        <Model />
        <Watermark />
        <ViewCube />
        <Browser />
        <div className="relative grid grid-cols-[1fr_auto_1fr] items-end pb-1.5">
          <div><PanelHead title="COMMENTS" plus /></div>
          <NavBar />
        </div>
      </main>
      <Timeline />
      <Taskbar />
    </div>
  );
}
